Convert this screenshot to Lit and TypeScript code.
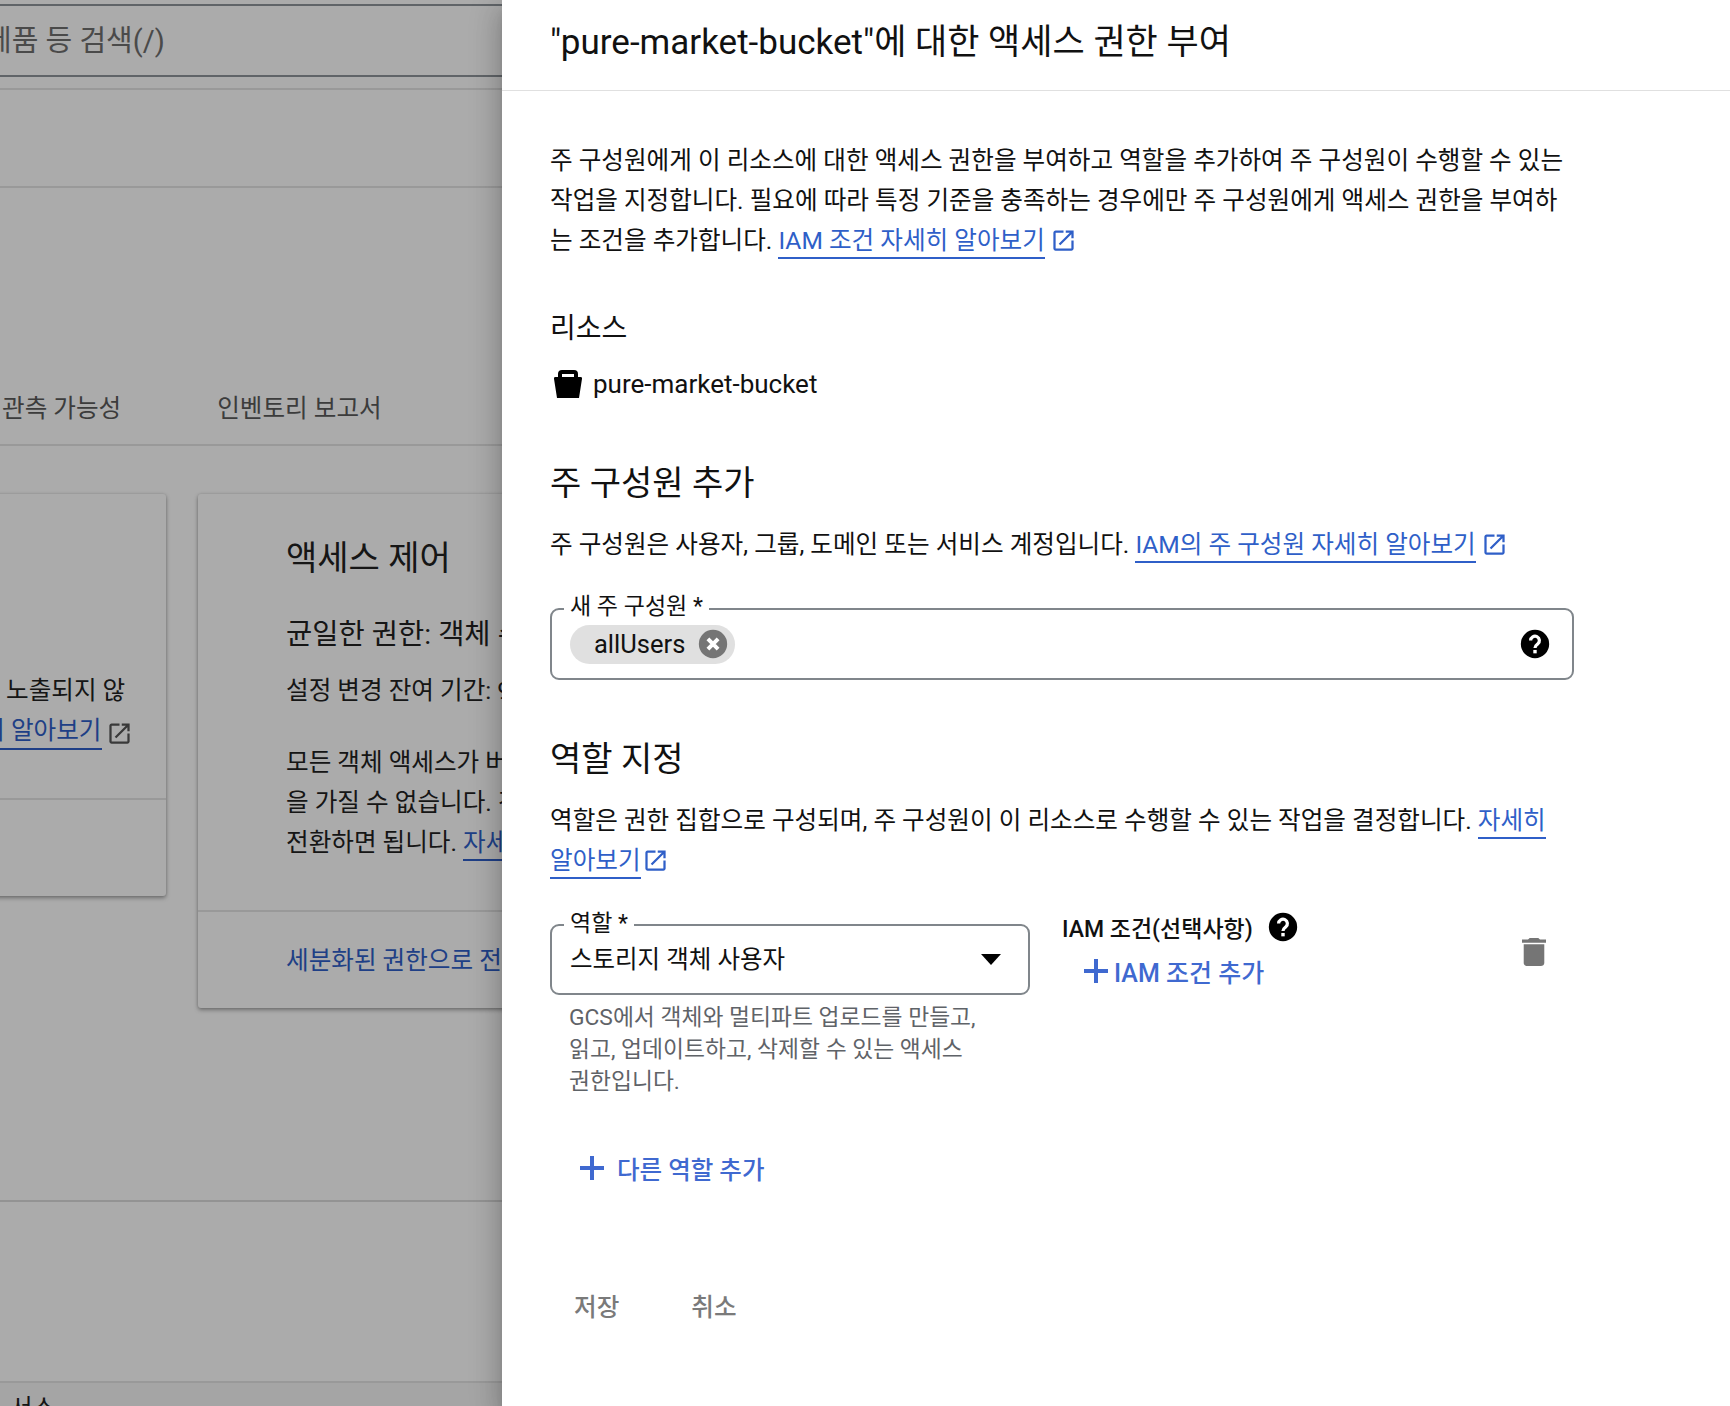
import { LitElement, html, css } from 'lit';
import { customElement } from 'lit/decorators.js';

const openPath = 'M19 19H5V5h7V3H5c-1.11 0-2 .9-2 2v14c0 1.1.89 2 2 2h14c1.1 0 2-.9 2-2v-7h-2v7zM14 3v2h3.59l-9.83 9.83 1.41 1.41L19 6.41V10h2V3h-7z';

const openIcon = html`<svg class="open" viewBox="0 0 24 24"><path d=${openPath}></path></svg>`;
const plus = html`<svg class="plus" viewBox="0 0 24 24"><path d="M10 0h4v10h10v4H14v10h-4V14H0v-4h10z"></path></svg>`;
const help = html`<svg class="help" viewBox="0 0 24 24">
  <circle cx="12" cy="12" r="10"></circle>
  <path d="M8.9 9.5a3.1 3.1 0 1 1 5 2.5c-1.2.9-1.9 1.3-1.9 2.8" fill="none" stroke="#fff" stroke-width="2.3"></path>
  <rect x="10.8" y="16.2" width="2.4" height="2.4" fill="#fff"></rect>
</svg>`;
const chipClose = html`<svg class="chip-x" viewBox="0 0 24 24">
  <circle cx="12" cy="12" r="10"></circle>
  <path d="M8.4 8.4l7.2 7.2M15.6 8.4l-7.2 7.2" fill="none" stroke="#fff" stroke-width="2.8"></path>
</svg>`;

@customElement('app-root')
export class AppRoot extends LitElement {
  static styles = css`
    :host {
      display: block;
      position: relative;
      width: 1730px;
      height: 1406px;
      overflow: hidden;
      background: #fff;
      font-family: Roboto, "Noto Sans CJK KR", sans-serif;
      color: #111;
    }

    * {
      box-sizing: border-box;
    }

    a {
      color: #2f5fc8;
      text-decoration: none;
    }

    svg {
      display: block;
      flex: none;
      fill: currentColor;
    }

    /* page behind the scrim */
    .page {
      display: flex;
      flex-direction: column;
      width: 502px;
      height: 1406px;
      overflow: hidden;
      color: #222;
      font-size: 24.6px;
      white-space: nowrap;
    }

    .search {
      display: flex;
      align-items: center;
      flex: none;
      height: 73px;
      margin-top: 4px;
      padding-bottom: 6px;
      border-top: 2px solid #90959b;
      border-bottom: 2px solid #90959b;
      font-size: 29px;
      color: #6f6f6f;
    }

    .search span {
      margin-left: -15px;
    }

    .strip {
      flex: none;
      height: 13px;
      border-bottom: 2px solid #e4e4e4;
    }

    .band {
      flex: none;
      height: 98px;
      border-bottom: 2px solid #e4e4e4;
    }

    .band.tall {
      height: 181px;
    }

    .tabs {
      display: flex;
      align-items: flex-end;
      gap: 96px;
      flex: none;
      height: 258px;
      padding-bottom: 20px;
      border-bottom: 2px solid #e4e4e4;
      color: #5a5a5a;
    }

    .tabs span:first-child {
      margin-left: 2px;
    }

    .cards {
      display: flex;
      align-items: flex-start;
      gap: 32px;
      flex: none;
      height: 756px;
      padding-top: 48px;
      margin-left: -134px;
      border-bottom: 2px solid #dcdcdc;
    }

    .card {
      flex: none;
      display: flex;
      flex-direction: column;
      background: #fff;
      border-radius: 3px;
      box-shadow: 0 2px 4px rgba(0, 0, 0, 0.35), 0 0 3px rgba(0, 0, 0, 0.12);
    }

    .card.left {
      width: 300px;
      height: 402px;
    }

    .card.left .top {
      height: 306px;
      padding: 177px 0 0 140px;
      border-bottom: 2px solid #e4e4e4;
      line-height: 40px;
    }

    .card.left .linkline {
      display: flex;
      align-items: center;
      gap: 4px;
      margin-top: 5px;
      margin-left: -69px;
    }

    .card.left a,
    .card.right .learn {
      padding-bottom: 2px;
      border-bottom: 2px solid #2f5fc8;
      line-height: 30px;
    }

    .card.right {
      width: 700px;
      height: 514px;
    }

    .card.right .top {
      height: 418px;
      padding: 42px 0 0 88px;
      border-bottom: 2px solid #e4e4e4;
    }

    .card.right h2 {
      margin: 0;
      font-size: 34px;
      font-weight: 400;
      line-height: 44px;
    }

    .card.right h3 {
      margin: 35px 0 0;
      font-size: 28.5px;
      font-weight: 400;
      line-height: 40px;
    }

    .card.right p {
      margin: 16px 0 0;
      line-height: 40px;
    }

    .card.right p.copy {
      margin-top: 32px;
    }

    .card.right .foot {
      padding: 29px 0 0 88px;
      line-height: 40px;
    }

    .footer {
      flex: 1;
      padding: 12px 0 0 10px;
      background: #f7f7f7;
      line-height: 28px;
    }

    .scrim {
      position: absolute;
      top: 0;
      left: 0;
      width: 502px;
      height: 1406px;
      background: rgba(0, 0, 0, 0.33);
    }

    /* side panel */
    .panel {
      position: absolute;
      top: 0;
      left: 502px;
      width: 1228px;
      height: 1406px;
      display: flex;
      flex-direction: column;
      background: #fff;
      box-shadow: 0 8px 10px -5px rgba(0, 0, 0, 0.2), 0 16px 24px 2px rgba(0, 0, 0, 0.14), 0 6px 30px 5px rgba(0, 0, 0, 0.12);
    }

    .panel-head {
      flex: none;
      display: flex;
      align-items: center;
      height: 91px;
      padding: 0 48px 14px;
      border-bottom: 1px solid #e0e0e0;
    }

    .panel-head h1 {
      margin: 0;
      font-size: 35px;
      font-weight: 400;
    }

    .panel-body {
      padding: 50px 48px 0;
      width: 1120px;
    }

    .text {
      margin: 0;
      font-size: 24.6px;
      line-height: 40px;
    }

    .ext {
      display: inline-flex;
      vertical-align: -5px;
      margin-left: 5px;
    }

    .ext.tight {
      margin-left: 1px;
    }

    .text a {
      padding-bottom: 2px;
      border-bottom: 2px solid #2f5fc8;
    }

    .open {
      width: 27px;
      height: 27px;
      color: #2f5fc8;
    }

    .card.left .open {
      color: #555;
    }

    .section-label {
      margin: 48px 0 0;
      font-size: 28px;
      font-weight: 400;
      line-height: 40px;
    }

    .resource {
      display: flex;
      align-items: center;
      gap: 11px;
      height: 40px;
      margin-top: 15px;
      padding-left: 4px;
      font-size: 26px;
    }

    .bucket {
      width: 28px;
      height: 28px;
      fill: #000;
    }

    h2.title {
      margin: 57px 0 0;
      font-size: 34px;
      font-weight: 400;
      line-height: 44px;
    }

    .after-title {
      margin-top: 20px;
    }

    .field {
      position: relative;
      display: flex;
      align-items: center;
      border: 2px solid #80868b;
      border-radius: 9px;
    }

    .field label {
      position: absolute;
      top: -18px;
      left: 12px;
      padding: 0 6px;
      background: #fff;
      font-size: 23px;
      line-height: 30px;
      white-space: nowrap;
    }

    .principal {
      justify-content: space-between;
      height: 72px;
      margin-top: 43px;
      padding: 0 20px 0 18px;
    }

    .chip {
      display: flex;
      align-items: center;
      justify-content: space-between;
      height: 39px;
      padding: 0 5px 0 24px;
      width: 165px;
      background: #e0e0e0;
      border-radius: 20px;
      font-size: 25.5px;
    }

    .chip-x {
      width: 34px;
      height: 34px;
      color: #757575;
    }

    .help {
      width: 34px;
      height: 34px;
      color: #000;
    }

    .role-row {
      display: flex;
      align-items: flex-start;
      margin-top: 43px;
    }

    .role-col {
      flex: none;
      width: 480px;
    }

    .select {
      justify-content: space-between;
      height: 71px;
      padding: 0 27px 4px 18px;
      font-size: 24.5px;
    }

    .select label {
      top: -17px;
    }

    .arrow {
      width: 20px;
      height: 11px;
      margin-top: 4px;
      fill: #000;
    }

    .hint {
      margin: 7px 0 0 19px;
      font-size: 22.8px;
      line-height: 32px;
      color: #5f6368;
      white-space: nowrap;
    }

    .cond {
      flex: none;
      width: 470px;
      margin: -14px 0 0 32px;
    }

    .cond-head {
      display: flex;
      align-items: center;
      gap: 13px;
      height: 34px;
      font-size: 23px;
      font-weight: 500;
    }

    .cond-add {
      display: flex;
      align-items: center;
      gap: 6px;
      height: 40px;
      margin: 7px 0 0 22px;
      font-size: 25px;
      font-weight: 500;
      color: #3f69d0;
    }

    .plus {
      width: 24px;
      height: 24px;
      fill: #3f69d0;
    }

    .trash {
      width: 24px;
      height: 28px;
      margin: 14px 0 0 -10px;
      fill: #757575;
    }

    .add-role {
      display: flex;
      align-items: center;
      gap: 13px;
      height: 48px;
      margin: 46px 0 0 30px;
      font-size: 24.5px;
      font-weight: 500;
      color: #3f69d0;
    }

    .actions {
      display: flex;
      align-items: center;
      gap: 72px;
      height: 48px;
      margin: 89px 0 0 24px;
      font-size: 24.6px;
      font-weight: 500;
      color: #7a7a7a;
    }
  `;

  render() {
    return html`
      <div class="page">
        <div class="search"><span>제품 등 검색(/)</span></div>
        <div class="strip"></div>
        <div class="band"></div>
        <div class="tabs"><span>관측 가능성</span><span>인벤토리 보고서</span></div>
        <div class="cards">
          <div class="card left">
            <div class="top">
              <div>노출되지 않</div>
              <div class="linkline"><a>자세히 알아보기</a>${openIcon}</div>
            </div>
          </div>
          <div class="card right">
            <div class="top">
              <h2>액세스 제어</h2>
              <h3>균일한 권한: 객체 수준 액세스</h3>
              <p>설정 변경 잔여 기간: 90일</p>
              <p class="copy">모든 객체 액세스가 버킷 수준 권한을 통해 부여<br />을 가질 수 없습니다. 객체별 액세스 권한이 필요<br />전환하면 됩니다. <a class="learn">자세히 알아보기</a></p>
            </div>
            <div class="foot"><a>세분화된 권한으로 전환</a></div>
          </div>
        </div>
        <div class="band tall"></div>
        <div class="footer">서소</div>
      </div>
      <div class="scrim"></div>

      <aside class="panel">
        <header class="panel-head">
          <h1>"pure-market-bucket"에 대한 액세스 권한 부여</h1>
        </header>
        <div class="panel-body">
          <p class="text">주 구성원에게 이 리소스에 대한 액세스 권한을 부여하고 역할을 추가하여 주 구성원이 수행할 수 있는 작업을 지정합니다. 필요에 따라 특정 기준을 충족하는 경우에만 주 구성원에게 액세스 권한을 부여하는 조건을 추가합니다. <a>IAM 조건 자세히 알아보기</a><span class="ext">${openIcon}</span></p>

          <h3 class="section-label">리소스</h3>
          <div class="resource">
            <svg class="bucket" viewBox="0 0 28 28"><path fill-rule="evenodd" d="M8 0h12a4 4 0 0 1 4 4v3h2.5a1.5 1.5 0 0 1 1.5 1.8L25 28H3L0 8.8A1.5 1.5 0 0 1 1.5 7H4V4a4 4 0 0 1 4-4zM8 4v3h12V4z"></path></svg>
            <span>pure-market-bucket</span>
          </div>

          <h2 class="title">주 구성원 추가</h2>
          <p class="text after-title">주 구성원은 사용자, 그룹, 도메인 또는 서비스 계정입니다. <a>IAM의 주 구성원 자세히 알아보기</a><span class="ext">${openIcon}</span></p>

          <div class="field principal">
            <label>새 주 구성원 *</label>
            <div class="chip"><span>allUsers</span>${chipClose}</div>
            ${help}
          </div>

          <h2 class="title">역할 지정</h2>
          <p class="text after-title">역할은 권한 집합으로 구성되며, 주 구성원이 이 리소스로 수행할 수 있는 작업을 결정합니다. <a>자세히</a> <a>알아보기</a><span class="ext tight">${openIcon}</span></p>

          <div class="role-row">
            <div class="role-col">
              <div class="field select">
                <label>역할 *</label>
                <span>스토리지 객체 사용자</span>
                <svg class="arrow" viewBox="0 0 20 11"><path d="M0 0h20L10 11z"></path></svg>
              </div>
              <div class="hint">GCS에서 객체와 멀티파트 업로드를 만들고,<br />읽고, 업데이트하고, 삭제할 수 있는 액세스<br />권한입니다.</div>
            </div>
            <div class="cond">
              <div class="cond-head"><span>IAM 조건(선택사항)</span>${help}</div>
              <div class="cond-add">${plus}<span>IAM 조건 추가</span></div>
            </div>
            <svg class="trash" viewBox="5 3 14 18" preserveAspectRatio="none"><path d="M6 19c0 1.1.9 2 2 2h8c1.1 0 2-.9 2-2V7H6v12zM19 4h-3.5l-1-1h-5l-1 1H5v2h14V4z"></path></svg>
          </div>

          <div class="add-role">${plus}<span>다른 역할 추가</span></div>

          <div class="actions"><span>저장</span><span>취소</span></div>
        </div>
      </aside>
    `;
  }
}
